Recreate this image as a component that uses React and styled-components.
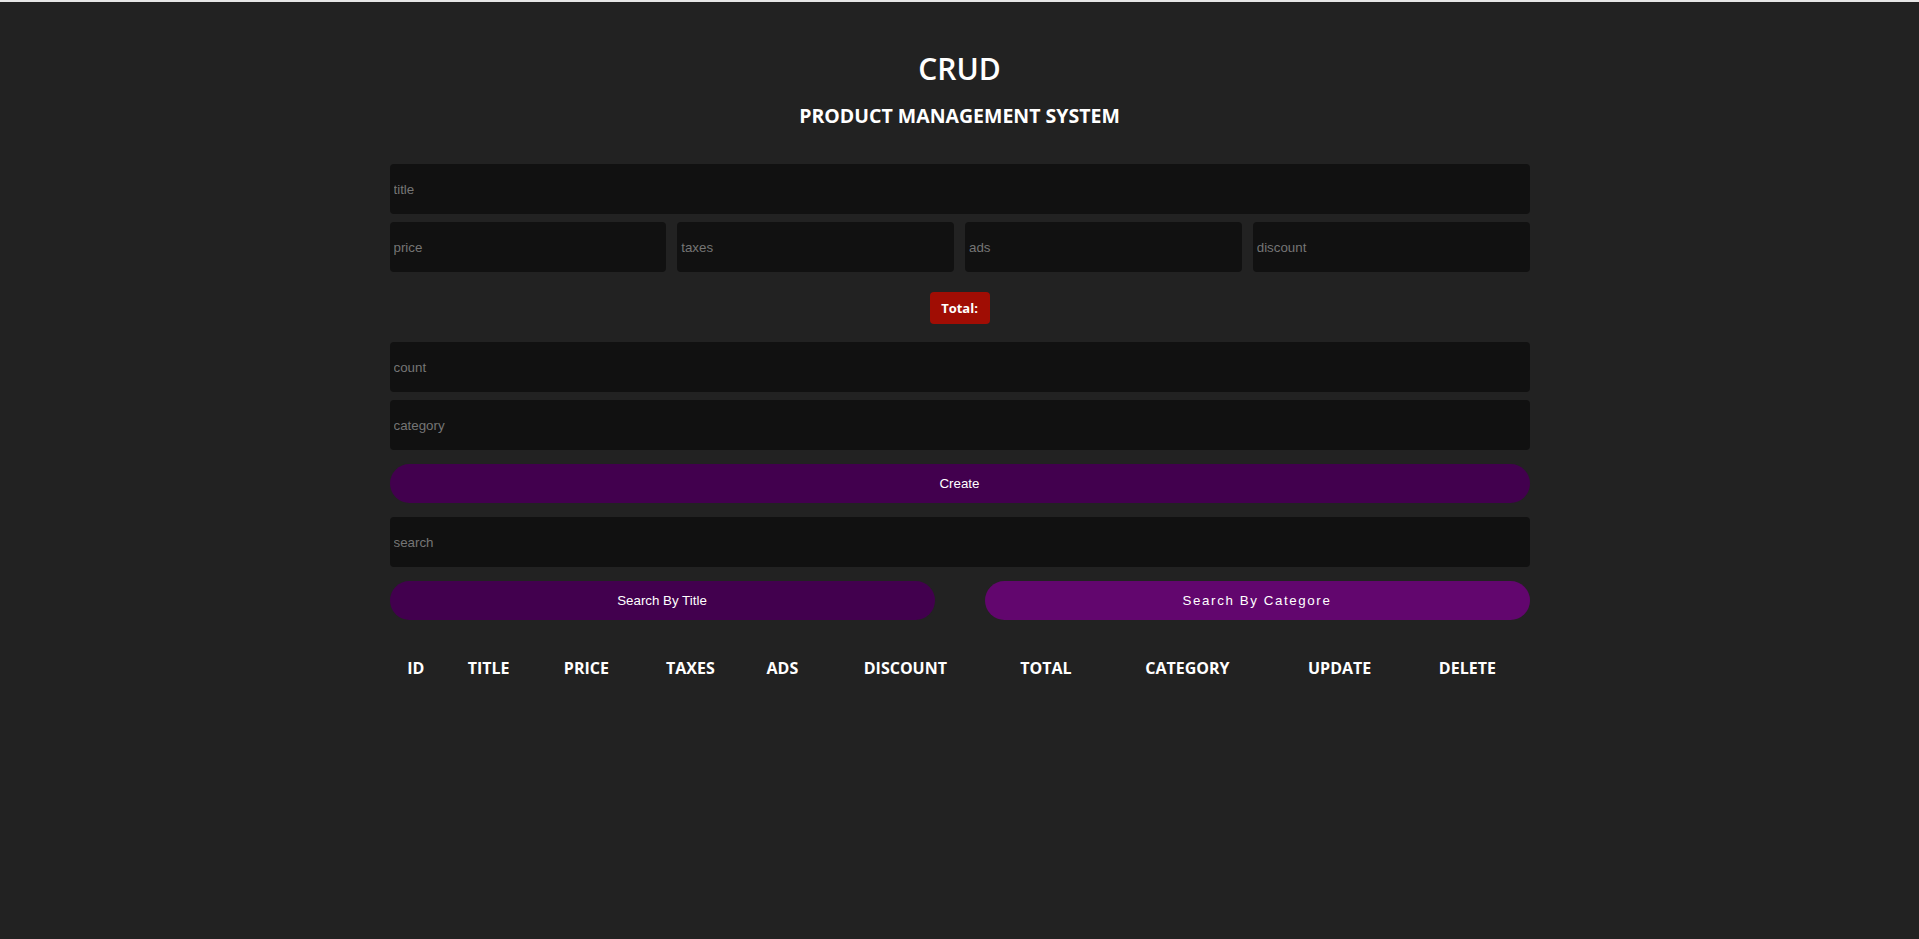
import React from "react";
import styled, { createGlobalStyle } from "styled-components";

const Global = createGlobalStyle`
  html { background: #e6e6e6; }
  body {
    margin: 0;
    margin-top: 2px;
    background: #222;
    min-height: calc(100vh - 2px);
    color: #fff;
    font-family: "Open Sans", "Noto Sans", sans-serif;
  }
  * { box-sizing: border-box; }
  input::placeholder { color: #757575; }
`;

const Crud = styled.div`
  width: 1140px;
  margin: 0 auto;
  padding-top: 46px;
`;

const Head = styled.header`
  text-align: center;
  margin-bottom: 35px;
`;

const Title = styled.h1`
  margin: 0;
  font-size: 30px;
  font-weight: 600;
  line-height: 42px;
`;

const Subtitle = styled.h2`
  margin: 13px 0 0;
  font-size: 19.5px;
  font-weight: 700;
  line-height: 26px;
`;

const Form = styled.div`
  display: flex;
  flex-direction: column;
  gap: 8px;
`;

const Field = styled.input`
  display: block;
  width: 100%;
  height: 50px;
  margin: 0;
  padding: 4px;
  border: none;
  outline: none;
  border-radius: 4px;
  background: #111;
  color: #fff;
  font-family: "Liberation Sans", Arial, sans-serif;
  font-size: 13.33px;
`;

const Price = styled.div`
  display: grid;
  grid-template-columns: repeat(4, 1fr);
  column-gap: 11px;
`;

const TotalRow = styled.div`
  display: flex;
  justify-content: center;
  margin: 12px 0 10px;
`;

const Total = styled.small`
  display: inline-flex;
  align-items: center;
  justify-content: center;
  width: 60px;
  height: 32px;
  border-radius: 4px;
  background: #a00d04;
  color: #fff;
  font-family: "Open Sans", sans-serif;
  font-size: 13px;
  font-weight: 700;
`;

const Button = styled.button`
  display: block;
  flex: none;
  width: 100%;
  height: 39px;
  margin: 6px 0;
  border: none;
  border-radius: 20px;
  background: ${(p) => (p.$hover ? "#62066e" : "#42004e")};
  color: #fff;
  cursor: pointer;
  font-family: "Liberation Sans", Arial, sans-serif;
  font-size: 13.33px;
  letter-spacing: ${(p) => (p.$hover ? "1.6px" : "0")};
`;

const SearchBtns = styled.div`
  display: flex;
  gap: 50px;
  margin-top: 6px;

  & > ${Button} {
    flex: 1 1 0;
    margin: 0;
  }
`;

const Table = styled.table`
  width: 100%;
  margin-top: 29px;
  text-align: center;
  border-collapse: separate;
`;

const Th = styled.th`
  padding: 6px 5px;
  font-family: "Open Sans", sans-serif;
  font-size: 16px;
  font-weight: 700;
  line-height: 22px;
  text-transform: uppercase;
`;

const heads = ["id", "title", "price", "taxes", "ads", "discount", "total", "category", "update", "delete"];

export default function App() {
  return (
    <>
      <Global />
      <Crud>
        <Head>
          <Title>CRUD</Title>
          <Subtitle>PRODUCT MANAGEMENT SYSTEM</Subtitle>
        </Head>
        <Form>
          <Field type="text" placeholder="title" />
          <Price>
            <Field type="number" placeholder="price" />
            <Field type="number" placeholder="taxes" />
            <Field type="number" placeholder="ads" />
            <Field type="number" placeholder="discount" />
          </Price>
          <TotalRow>
            <Total>Total:</Total>
          </TotalRow>
          <Field type="number" placeholder="count" />
          <Field type="text" placeholder="category" />
          <Button>Create</Button>
          <Field type="text" placeholder="search" />
          <SearchBtns>
            <Button>Search By Title</Button>
            <Button $hover>Search By Categore</Button>
          </SearchBtns>
        </Form>
        <Table>
          <thead>
            <tr>
              {heads.map((h) => (
                <Th key={h}>{h}</Th>
              ))}
            </tr>
          </thead>
          <tbody />
        </Table>
      </Crud>
    </>
  );
}
